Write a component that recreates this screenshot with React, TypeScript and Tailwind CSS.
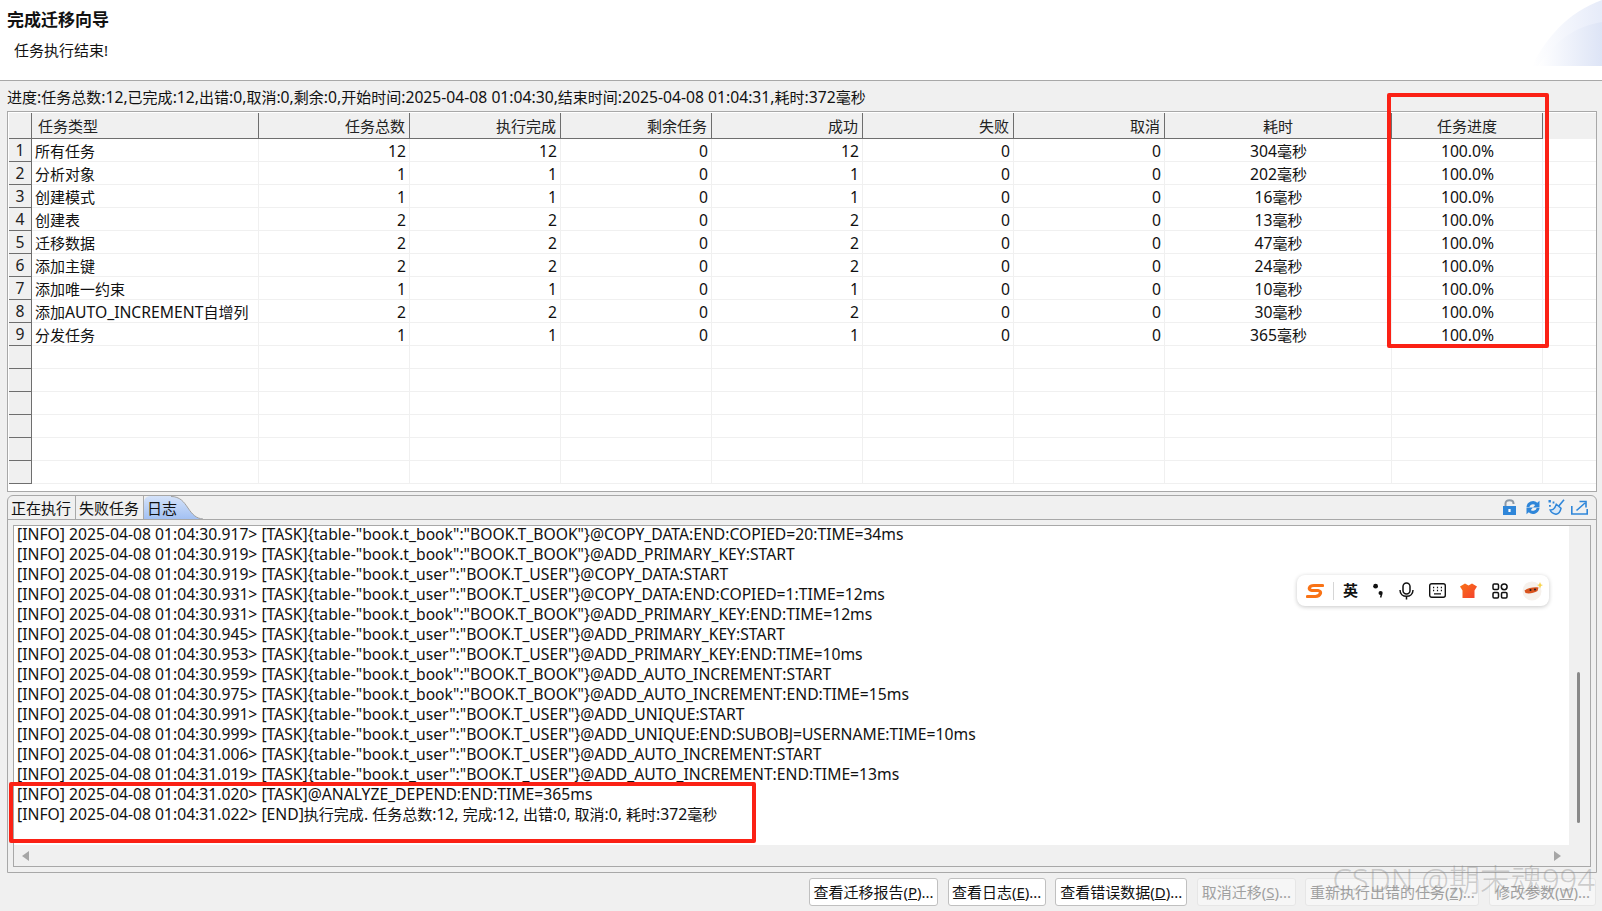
import React from 'react'

const fontStack = "font-['Noto_Sans','Noto_Sans_CJK_SC',sans-serif]"

const columns = [
  { name: '任务类型', width: 'w-[227px]', align: 'text-left' },
  { name: '任务总数', width: 'w-[151px]', align: 'text-right' },
  { name: '执行完成', width: 'w-[151px]', align: 'text-right' },
  { name: '剩余任务', width: 'w-[151px]', align: 'text-right' },
  { name: '成功', width: 'w-[151px]', align: 'text-right' },
  { name: '失败', width: 'w-[151px]', align: 'text-right' },
  { name: '取消', width: 'w-[151px]', align: 'text-right' },
  { name: '耗时', width: 'w-[227px]', align: 'text-center' },
  { name: '任务进度', width: 'w-[151px]', align: 'text-center' },
]

const rows = [
  ['所有任务', '12', '12', '0', '12', '0', '0', '304毫秒', '100.0%'],
  ['分析对象', '1', '1', '0', '1', '0', '0', '202毫秒', '100.0%'],
  ['创建模式', '1', '1', '0', '1', '0', '0', '16毫秒', '100.0%'],
  ['创建表', '2', '2', '0', '2', '0', '0', '13毫秒', '100.0%'],
  ['迁移数据', '2', '2', '0', '2', '0', '0', '47毫秒', '100.0%'],
  ['添加主键', '2', '2', '0', '2', '0', '0', '24毫秒', '100.0%'],
  ['添加唯一约束', '1', '1', '0', '1', '0', '0', '10毫秒', '100.0%'],
  ['添加AUTO_INCREMENT自增列', '2', '2', '0', '2', '0', '0', '30毫秒', '100.0%'],
  ['分发任务', '1', '1', '0', '1', '0', '0', '365毫秒', '100.0%'],
]

const logs = [
  '[INFO] 2025-04-08 01:04:30.917> [TASK]{table-"book.t_book":"BOOK.T_BOOK"}@COPY_DATA:END:COPIED=20:TIME=34ms',
  '[INFO] 2025-04-08 01:04:30.919> [TASK]{table-"book.t_book":"BOOK.T_BOOK"}@ADD_PRIMARY_KEY:START',
  '[INFO] 2025-04-08 01:04:30.919> [TASK]{table-"book.t_user":"BOOK.T_USER"}@COPY_DATA:START',
  '[INFO] 2025-04-08 01:04:30.931> [TASK]{table-"book.t_user":"BOOK.T_USER"}@COPY_DATA:END:COPIED=1:TIME=12ms',
  '[INFO] 2025-04-08 01:04:30.931> [TASK]{table-"book.t_book":"BOOK.T_BOOK"}@ADD_PRIMARY_KEY:END:TIME=12ms',
  '[INFO] 2025-04-08 01:04:30.945> [TASK]{table-"book.t_user":"BOOK.T_USER"}@ADD_PRIMARY_KEY:START',
  '[INFO] 2025-04-08 01:04:30.953> [TASK]{table-"book.t_user":"BOOK.T_USER"}@ADD_PRIMARY_KEY:END:TIME=10ms',
  '[INFO] 2025-04-08 01:04:30.959> [TASK]{table-"book.t_book":"BOOK.T_BOOK"}@ADD_AUTO_INCREMENT:START',
  '[INFO] 2025-04-08 01:04:30.975> [TASK]{table-"book.t_book":"BOOK.T_BOOK"}@ADD_AUTO_INCREMENT:END:TIME=15ms',
  '[INFO] 2025-04-08 01:04:30.991> [TASK]{table-"book.t_user":"BOOK.T_USER"}@ADD_UNIQUE:START',
  '[INFO] 2025-04-08 01:04:30.999> [TASK]{table-"book.t_user":"BOOK.T_USER"}@ADD_UNIQUE:END:SUBOBJ=USERNAME:TIME=10ms',
  '[INFO] 2025-04-08 01:04:31.006> [TASK]{table-"book.t_user":"BOOK.T_USER"}@ADD_AUTO_INCREMENT:START',
  '[INFO] 2025-04-08 01:04:31.019> [TASK]{table-"book.t_user":"BOOK.T_USER"}@ADD_AUTO_INCREMENT:END:TIME=13ms',
  '[INFO] 2025-04-08 01:04:31.020> [TASK]@ANALYZE_DEPEND:END:TIME=365ms',
  '[INFO] 2025-04-08 01:04:31.022> [END]执行完成. 任务总数:12, 完成:12, 出错:0, 取消:0, 耗时:372毫秒',
]

const buttons = [
  { label: '查看迁移报告', key: 'P', width: 'w-[129px]', off: false },
  { label: '查看日志', key: 'E', width: 'w-[98px]', off: false },
  { label: '查看错误数据', key: 'D', width: 'w-[132px]', off: false },
  { label: '取消迁移', key: 'S', width: 'w-[99px]', off: true },
  { label: '重新执行出错的任务', key: 'Z', width: 'w-[174px]', off: true },
  { label: '修改参数', key: 'W', width: 'w-[107px]', off: true },
]

// latin runs sit a bit larger than the 15px CJK, like the original UI font
const Mixed = ({ text }: { text: string }) => (
  <>
    {text.split(/([\u4e00-\u9fff]+)/).map((part, i) =>
      i % 2 === 1 ? part : <span key={i} className="text-[15.7px]">{part}</span>
    )}
  </>
)

const Table = () => (
  <div className="ml-[7px] mr-[5px] h-[381px] border border-[#a8a8a8] bg-white overflow-hidden pt-[1px] pl-[1px]">
    <div className="flex h-[26px] bg-[#f0f0f0] pr-[3px]">
      <div className="w-[23px] shrink-0 border-r border-b border-[#6e6e6e]" />
      {columns.map((col, i) => (
        <div
          key={col.name}
          className={`${col.width} shrink-0 border-r border-b border-[#6e6e6e] pt-[3px] text-[15px] leading-[20px] text-[#222] ${col.align} ${i === 0 ? 'pl-[6px]' : i === 7 || i === 8 ? '' : 'pr-[4px]'}`}
        >
          {col.name}
        </div>
      ))}
      <div className="flex-1" />
    </div>
    {Array.from({ length: 15 }).map((_, r) => {
      const row = rows[r]
      return (
        <div key={r} className="flex h-[23px]">
          <div className="w-[23px] shrink-0 bg-[#f0f0f0] border-r border-b border-[#6e6e6e] text-center text-[15.7px] leading-[23px] text-[#222]">
            {row ? r + 1 : ''}
          </div>
          {columns.map((col, c) => (
            <div
              key={col.name}
              className={`${col.width} shrink-0 border-r border-b border-[#f0f0f0] text-[15px] leading-[25px] text-[#111] whitespace-nowrap ${col.align} ${c === 0 ? 'pl-[3px]' : c === 7 || c === 8 ? 'pl-[1px]' : 'pr-[3px]'}`}
            >
              {row ? <Mixed text={row[c]} /> : ''}
            </div>
          ))}
          <div className="flex-1 border-b border-[#f0f0f0]" />
        </div>
      )
    })}
  </div>
)

const TabStrip = () => (
  <div className="flex h-[24px] items-stretch border-b border-[#a8a8a8] pr-[8px]">
    <div className="flex items-end">
      <div className="h-[23px] w-[68px] border-r border-[#a8a8a8] rounded-tl-[6px] pl-[3px] text-[15px] leading-[24px] text-[#111]">正在执行</div>
      <div className="h-[23px] w-[68px] border-r border-[#a8a8a8] rounded-tl-[6px] pl-[3px] text-[15px] leading-[24px] text-[#111]">失败任务</div>
      <div className="relative z-10 h-[23px] w-[27px] rounded-tl-[6px] bg-gradient-to-b from-[#d4e2f9] to-[#a3c1f3] pl-[3px] text-[15px] leading-[24px] text-[#111] whitespace-nowrap">
        日志
      </div>
      <svg width="32" height="23" viewBox="0 0 32 23" className="block">
        <defs>
          <linearGradient id="tabFill" x1="0" y1="0" x2="0" y2="1">
            <stop offset="0" stopColor="#d4e2f9" />
            <stop offset="1" stopColor="#a3c1f3" />
          </linearGradient>
        </defs>
        <path d="M0 0.5C9 0.5 13 6 17 12C21 18 25 22.5 32 23H0Z" fill="url(#tabFill)" />
        <path d="M0 0.5C9 0.5 13 6 17 12C21 18 25 22.5 32 23" fill="none" stroke="#a0a0a0" />
      </svg>
    </div>
    <div className="ml-auto flex items-center pb-[1px]">
      <svg width="13" height="16" viewBox="0 0 13 16">
        <path d="M2.5 7V4.5C2.5 2.3 4.2 1.2 6.5 1.2S10.5 2.3 10.5 4.5V5" fill="none" stroke="#8d99a6" strokeWidth="2" />
        <path d="M0 7H13V16H0Z" fill="#2f86d9" />
        <rect x="5.4" y="10" width="2.2" height="3" fill="#fff" />
      </svg>
      <svg width="14" height="15" viewBox="0 0 14 15" className="ml-[10px]">
        <path d="M0.5 7A6.5 6.5 0 0 1 11.3 2.7L13.5 0.8V7.5H7L9.2 5A3.6 3.6 0 0 0 3.4 7Z" fill="#2f86d9" />
        <path d="M13.5 8A6.5 6.5 0 0 1 2.7 12.3L0.5 14.2V7.5H7L4.8 10A3.6 3.6 0 0 0 10.6 8Z" fill="#2f86d9" />
      </svg>
      <svg width="17" height="16" viewBox="0 0 17 16" className="ml-[8px]">
        <path d="M16 0.8L10.8 7" stroke="#2f86d9" strokeWidth="1.6" fill="none" />
        <path d="M8.3 5.3L13 9.3C12.4 12.2 10.5 14.8 8 15.3C5.3 14.8 3 13.2 2.2 11C5 11.3 7.2 8.8 8.3 5.3Z" fill="#d8e8f8" stroke="#2f86d9" strokeWidth="1.5" />
        <path d="M0.5 1h2.4v2.4H0.5zM4.6 2.6h1.8v1.8H4.6zM1 6h1.8v1.8H1z" fill="#2f86d9" />
      </svg>
      <svg width="17" height="15" viewBox="0 0 17 15" className="ml-[6px]">
        <path d="M0.8 6V14H16.2V9" fill="none" stroke="#2f86d9" strokeWidth="1.6" />
        <path d="M5.5 10.5L14 3M8.5 1.5H15V7.5" fill="none" stroke="#2f86d9" strokeWidth="1.6" />
      </svg>
    </div>
  </div>
)

const LogPane = () => (
  <div className="mx-[5px] mt-[5px] h-[342px] border border-[#a8a8a8] bg-white flex flex-col">
    <div className="flex flex-1 min-h-0">
      <div className="flex-1 min-w-0 pl-[3px]">
        <div className="-mt-[2px]">
          {logs.map((line, i) => (
            <div key={i} className="h-[20px] text-[15px] leading-[20px] text-[#111] whitespace-nowrap">
              <Mixed text={line} />
            </div>
          ))}
        </div>
      </div>
      <div className="relative w-[21px] shrink-0 bg-[#f0f0f0]">
        <div className="absolute left-[8px] top-[146px] h-[151px] w-[3px] rounded-full bg-[#8a8a8a]" />
      </div>
    </div>
    <div className="flex h-[21px] shrink-0 items-center justify-between bg-[#f0f0f0] px-[8px]">
      <svg width="7" height="10" viewBox="0 0 7 10"><path d="M7 0V10L0 5Z" fill="#a6a6a6" /></svg>
      <svg width="7" height="10" viewBox="0 0 7 10" className="mr-[21px]"><path d="M0 0V10L7 5Z" fill="#a6a6a6" /></svg>
    </div>
  </div>
)

const ImeBar = () => (
  <div className="absolute left-[1297px] top-[575px] flex h-[31px] w-[252px] items-center rounded-[8px] bg-white pl-[9px] shadow-[0_1px_4px_rgba(0,0,0,0.22)]">
    <svg width="18" height="16" viewBox="0 0 18 16">
      <path d="M16.5 2.5H8C3 2.5 1.5 6.8 6 7.5H12C16.5 8.2 14.5 13 9.5 13.5H1.5" fill="none" stroke="#f97316" strokeWidth="3.2" strokeLinecap="round" />
    </svg>
    <div className="ml-[9px] h-[18px] w-px bg-[#d6d6d6]" />
    <span className="ml-[9px] text-[15px] font-bold leading-none text-[#111]">英</span>
    <svg width="10" height="15" viewBox="0 0 10 15" className="ml-[15px]">
      <circle cx="2.6" cy="3.2" r="2.4" fill="#111" />
      <circle cx="7.6" cy="10" r="2.1" fill="#111" />
      <path d="M8.6 11L7.6 14.5" stroke="#111" strokeWidth="1.5" />
    </svg>
    <svg width="15" height="18" viewBox="0 0 15 18" className="ml-[16px]">
      <rect x="4" y="1" width="7" height="11" rx="3.5" fill="none" stroke="#111" strokeWidth="1.5" />
      <path d="M1 8C1 12 4 14.3 7.5 14.3S14 12 14 8M7.5 14.3V17.5" fill="none" stroke="#111" strokeWidth="1.5" />
    </svg>
    <svg width="17" height="15" viewBox="0 0 17 15" className="ml-[15px]">
      <rect x="0.7" y="0.7" width="15.6" height="13.6" rx="2" fill="none" stroke="#111" strokeWidth="1.4" />
      <path d="M4 4.5h1.2M7.9 4.5h1.2M11.8 4.5h1.2M4 7.5h1.2M7.9 7.5h1.2M11.8 7.5h1.2M5 10.8h7" stroke="#111" strokeWidth="1.3" />
    </svg>
    <svg width="17" height="15" viewBox="0 0 17 15" className="ml-[14px]">
      <defs>
        <linearGradient id="shirt" x1="0" y1="0" x2="1" y2="1">
          <stop offset="0" stopColor="#f97316" />
          <stop offset="1" stopColor="#f43f2e" />
        </linearGradient>
      </defs>
      <path d="M5 0.5L8.5 2.5L12 0.5L17 3.5L14.5 7.5V15H2.5V7.5L0 3.5Z" fill="url(#shirt)" />
    </svg>
    <svg width="16" height="16" viewBox="0 0 16 16" className="ml-[15px]">
      <rect x="1" y="1" width="5.5" height="5.5" rx="1.2" fill="none" stroke="#111" strokeWidth="1.5" />
      <circle cx="12.2" cy="3.8" r="2.9" fill="none" stroke="#111" strokeWidth="1.5" />
      <rect x="1" y="9.5" width="5.5" height="5.5" rx="1.2" fill="none" stroke="#111" strokeWidth="1.5" />
      <rect x="9.5" y="9.5" width="5.5" height="5.5" rx="1.2" fill="none" stroke="#111" strokeWidth="1.5" />
    </svg>
    <svg width="21" height="21" viewBox="0 0 21 21" className="ml-[14px]">
      <circle cx="10" cy="11" r="9.5" fill="#f6f1ec" />
      <path d="M3 4L6.5 2.5L6 6ZM13 2.5L16.5 4L13.5 6Z" fill="#f6f1ec" />
      <path d="M2.5 10.5C6 8 12 6.8 16.5 7.5L15.5 11C12 13 7 14 3.5 13Z" fill="#d9531e" />
      <circle cx="8.5" cy="10" r="1" fill="#222" />
      <circle cx="13" cy="9.5" r="1" fill="#222" />
      <path d="M18 2L19 4.5L21 5L19 6L18 8.5L17 6L15 5L17 4.5Z" fill="#f8d34a" />
    </svg>
  </div>
)

const App = () => (
  <div className={`relative h-[911px] w-[1602px] overflow-hidden bg-[#f0f0f0] text-[15px] ${fontStack}`}>
    <div className="relative h-[81px] border-b border-[#a8a8a8] bg-white pl-[7px]">
      <div className="pt-[9px] text-[17px] font-semibold leading-[22px] text-[#111]">完成迁移向导</div>
      <div className="pl-[7px] pt-[9px] text-[15px] leading-[20px] text-[#111]">任务执行结束!</div>
      <svg width="70" height="66" viewBox="0 0 70 66" className="absolute right-0 top-0">
        <defs>
          <linearGradient id="cornerOuter" x1="0" y1="0" x2="1" y2="0">
            <stop offset="0" stopColor="#ffffff" />
            <stop offset="1" stopColor="#e6ebf9" />
          </linearGradient>
          <linearGradient id="cornerInner" x1="0" y1="0" x2="1" y2="0">
            <stop offset="0" stopColor="#ffffff" />
            <stop offset="1" stopColor="#dde4f6" />
          </linearGradient>
        </defs>
        <path d="M0 66C14 38 36 12 70 0V66Z" fill="url(#cornerOuter)" />
        <path d="M6 66C20 44 42 26 70 22V66Z" fill="url(#cornerInner)" />
      </svg>
    </div>
    <div className="h-[30px] pl-[7px] pt-[6px] text-[15px] leading-[20px] text-[#111] whitespace-nowrap">
      <Mixed text="进度:任务总数:12,已完成:12,出错:0,取消:0,剩余:0,开始时间:2025-04-08 01:04:30,结束时间:2025-04-08 01:04:31,耗时:372毫秒" />
    </div>
    <Table />
    <div className="ml-[7px] mr-[5px] mt-[3px] h-[378px] rounded-t-[6px] border border-[#a8a8a8] bg-[#f0f0f0]">
      <TabStrip />
      <LogPane />
    </div>
    <div className="mt-[5px] mr-[6px] flex justify-end gap-[9.6px]">
      {buttons.map((b) => (
        <div
          key={b.key}
          className={`${b.width} h-[28px] rounded-[3px] border text-center text-[15px] leading-[26px] whitespace-nowrap ${b.off ? 'border-[#e6e6e6] bg-[#f6f6f6] text-[#a0a0a0]' : 'border-[#c0c0c0] bg-white text-[#111]'}`}
        >
          {b.label}(<span className="underline">{b.key}</span>)...
        </div>
      ))}
    </div>

    {/* annotations drawn over the window */}
    <div className="absolute left-[1387px] top-[93px] h-[255px] w-[162px] rounded-[2px] border-[4px] border-[#fb2115]" />
    <div className="absolute left-[9px] top-[782px] h-[61px] w-[747px] rounded-[2px] border-[4px] border-[#fb2115]" />
    <ImeBar />
    <div className="absolute right-[7px] top-[861px] text-[31px] font-light leading-[36px] text-[#8a8a8a]/40 whitespace-nowrap">CSDN @期末魂994</div>
  </div>
)

export default App
